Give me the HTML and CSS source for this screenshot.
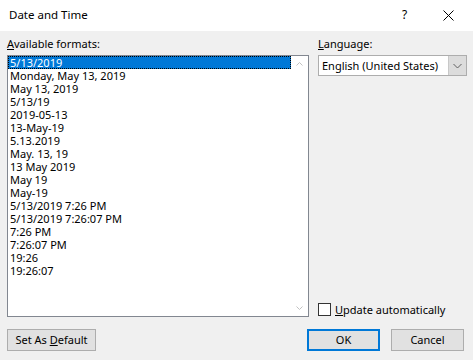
FILE: index.html
```html
<!DOCTYPE html>
<html>
<head>
<meta charset="utf-8">
<link rel="stylesheet" href="styles.css">
</head>
<body>
<div class="dialog">
  <div class="titlebar">
    <span class="title">Date and Time</span>
    <span class="help">?</span>
    <span class="close">
      <svg width="11" height="11" viewBox="0 0 11 11"><path d="M0.5 0.5 L10.5 10.5 M10.5 0.5 L0.5 10.5" stroke="#000" stroke-width="1" fill="none"/></svg>
    </span>
  </div>
  <div class="content">
    <div class="main">
      <div class="left">
        <div class="lbl"><u>A</u>vailable formats:</div>
        <div class="listbox">
          <ul class="items">
            <li class="sel">5/13/2019</li>
            <li>Monday, May 13, 2019</li>
            <li>May 13, 2019</li>
            <li>5/13/19</li>
            <li>2019-05-13</li>
            <li>13-May-19</li>
            <li>5.13.2019</li>
            <li>May. 13, 19</li>
            <li>13 May 2019</li>
            <li>May 19</li>
            <li>May-19</li>
            <li>5/13/2019 7:26 PM</li>
            <li>5/13/2019 7:26:07 PM</li>
            <li>7:26 PM</li>
            <li>7:26:07 PM</li>
            <li>19:26</li>
            <li>19:26:07</li>
          </ul>
          <div class="scrollbar">
            <svg width="17" height="17" viewBox="0 0 17 17"><path d="M5.5 9.5 L8.5 6.5 L11.5 9.5" stroke="#c2c2c2" stroke-width="1" fill="none"/></svg>
            <svg width="17" height="17" viewBox="0 0 17 17"><path d="M5.5 7.5 L8.5 10.5 L11.5 7.5" stroke="#c2c2c2" stroke-width="1" fill="none"/></svg>
          </div>
        </div>
      </div>
      <div class="right">
        <div class="lbl"><u>L</u>anguage:</div>
        <div class="combo">
          <span class="combo-text">English (United States)</span>
          <span class="drop">
            <svg width="17" height="19" viewBox="0 0 17 19"><path d="M4.5 8 L8.5 12 L12.5 8" stroke="#606060" stroke-width="1" fill="none"/></svg>
          </span>
        </div>
        <label class="check">
          <span class="box"></span>
          <span><u>U</u>pdate automatically</span>
        </label>
      </div>
    </div>
    <div class="footer">
      <button class="btn btn-default">Set As <u>D</u>efault</button>
      <div class="spacer"></div>
      <button class="btn btn-ok">OK</button>
      <button class="btn btn-cancel">Cancel</button>
    </div>
  </div>
</div>
</body>
</html>
```
FILE: styles.css
```css
* { box-sizing: border-box; }
html, body {
  margin: 0;
  padding: 0;
  width: 473px;
  height: 360px;
  overflow: hidden;
  background: #f0f0f0;
}
body {
  font-family: "Noto Sans", "Open Sans", sans-serif;
  font-size: 11px;
  color: #000;
}
.dialog {
  width: 473px;
  height: 360px;
  display: flex;
  flex-direction: column;
}
.titlebar {
  height: 31px;
  background: #fff;
  display: flex;
  align-items: center;
  padding-left: 9px;
}
.title {
  flex: 1;
  font-size: 11.5px;
  line-height: 16px;
  margin-top: -1px;
}
.help {
  width: 12px;
  margin-right: 30px;
  font-size: 12px;
  line-height: 16px;
  margin-top: -1px;
  padding-left: 1px;
}
.close {
  width: 11px;
  height: 11px;
  margin-right: 19px;
  margin-top: -1px;
  display: flex;
}
.content {
  flex: 1;
  padding: 5px 6px 0 7px;
  display: flex;
  flex-direction: column;
}
.main {
  display: flex;
  gap: 9px;
  height: 281px;
}
.left {
  width: 302px;
  display: flex;
  flex-direction: column;
}
.lbl {
  line-height: 16px;
  height: 16px;
  margin-bottom: 3px;
  white-space: nowrap;
}
.listbox {
  flex: 1;
  border: 1px solid #828790;
  background: #fff;
  display: flex;
}
.items {
  list-style: none;
  margin: 0;
  padding: 0;
  flex: 1;
}
.items li {
  height: 13px;
  line-height: 13px;
  padding-left: 2px;
  white-space: nowrap;
}
.items li.sel {
  background: #0078d7;
  color: #fff;
  outline: 1px dotted #000;
  outline-offset: -1px;
}
.scrollbar {
  width: 17px;
  display: flex;
  flex-direction: column;
  justify-content: space-between;
  background: #fff;
}
.scrollbar svg { display: block; }
.right {
  width: 149px;
  display: flex;
  flex-direction: column;
}
.combo {
  height: 21px;
  border: 1px solid #adadad;
  background: #fff;
  display: flex;
}
.combo-text {
  flex: 1;
  line-height: 19px;
  padding-left: 3px;
  white-space: nowrap;
  overflow: hidden;
}
.drop {
  width: 18px;
  background: #dcdcdc;
  border-left: 1px solid #c8c8c8;
  display: flex;
  justify-content: center;
}
.check {
  margin-top: auto;
  display: flex;
  align-items: center;
  gap: 4px;
  height: 15px;
  white-space: nowrap;
}
.box {
  width: 13px;
  height: 13px;
  border: 1px solid #333;
  background: #fff;
  flex: none;
}
.footer {
  margin-top: 12px;
  display: flex;
  height: 22px;
}
.spacer { flex: 1; }
.btn {
  font-family: inherit;
  font-size: 11px;
  color: #000;
  background: #e1e1e1;
  border: 1px solid #adadad;
  height: 22px;
  padding: 0;
  margin: 0;
  line-height: 18px;
}
.btn-default { width: 89px; }
.btn-ok {
  width: 73px;
  border: 2px solid #0078d7;
  margin-right: 11px;
}
.btn-cancel {
  width: 73px;
  margin-right: 3px;
}
```
